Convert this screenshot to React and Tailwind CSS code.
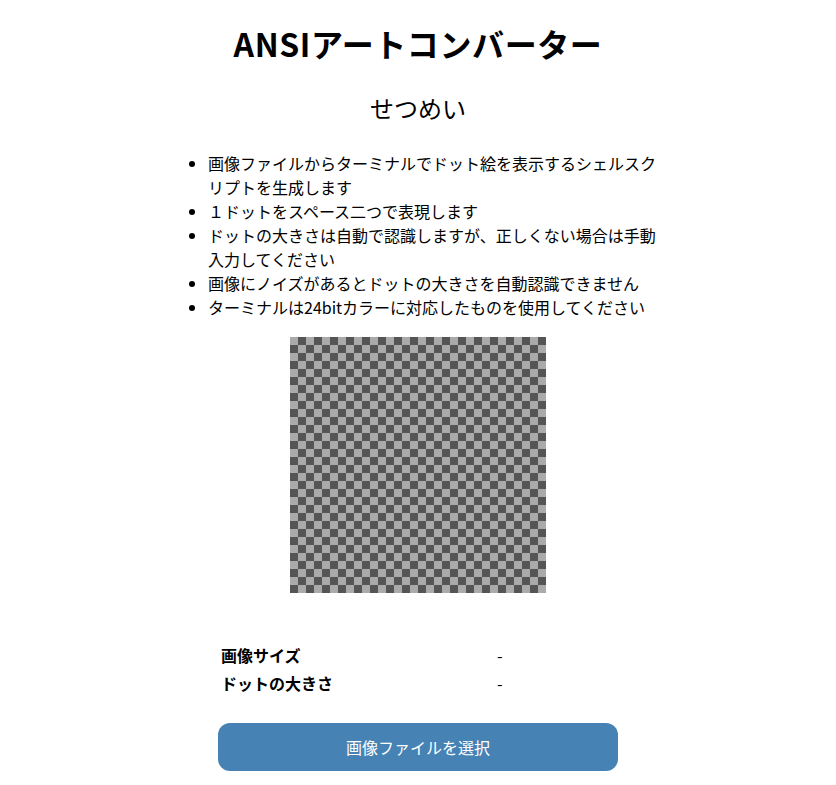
import React from 'react';

const notes = [
  '画像ファイルからターミナルでドット絵を表示するシェルスクリプトを生成します',
  '１ドットをスペース二つで表現します',
  'ドットの大きさは自動で認識しますが、正しくない場合は手動入力してください',
  '画像にノイズがあるとドットの大きさを自動認識できません',
  'ターミナルは24bitカラーに対応したものを使用してください',
];

const Checker = () => (
  <svg width="256" height="256" viewBox="0 0 256 256" className="block">
    <defs>
      <pattern id="chk" width="16" height="16" patternUnits="userSpaceOnUse">
        <rect width="16" height="16" fill="#555555" />
        <rect x="0" y="0" width="8" height="8" fill="#aaaaaa" />
        <rect x="8" y="8" width="8" height="8" fill="#aaaaaa" />
      </pattern>
    </defs>
    <rect width="256" height="256" fill="url(#chk)" />
  </svg>
);

export default function App() {
  return (
    <div className="min-h-[785px] bg-white text-black font-['Noto_Sans_CJK_JP','Noto_Sans',sans-serif]">
      <div className="mx-auto w-[500px] pt-[23px] flex flex-col items-center">
        <h1 className="text-[32px] leading-[40px] font-bold tracking-[0.6px]">ANSIアートコンバーター</h1>

        <h2 className="mt-[29px] text-[24px] leading-[32px] font-normal">せつめい</h2>

        {/* notes */}
        <ul className="mt-[27px] w-full pl-10 list-disc text-[16px] leading-6">
          {notes.map((n) => (
            <li key={n}>{n}</li>
          ))}
        </ul>

        <div className="mt-[18px]">
          <Checker />
        </div>

        {/* image info */}
        <div className="mt-[48px] w-[400px] grid grid-cols-[276px_1fr] text-[16px] leading-[28px]">
          <div className="pl-[3px] font-bold">画像サイズ</div>
          <div className="pl-[3px]">-</div>
          <div className="pl-[3px] font-bold">ドットの大きさ</div>
          <div className="pl-[3px]">-</div>
        </div>

        <button className="mt-[26px] w-[400px] h-12 rounded-xl bg-[#4682b4] text-white text-[16px]">
          画像ファイルを選択
        </button>
      </div>
    </div>
  );
}
